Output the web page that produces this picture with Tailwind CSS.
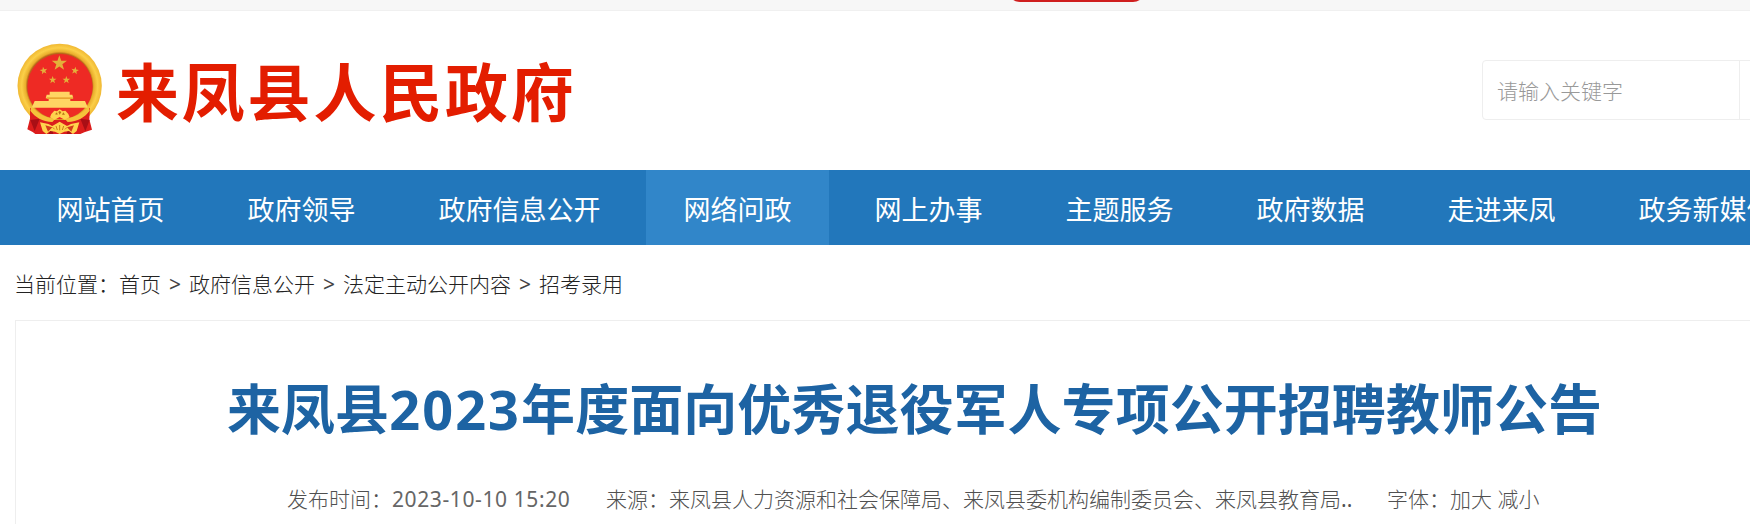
<!DOCTYPE html>
<html lang="zh-CN">
<head>
  <meta charset="UTF-8">
  <meta name="viewport" content="width=device-width, initial-scale=1.0">
  <title>来凤县人民政府</title>
  <script src="https://cdn.jsdelivr.net/npm/@tailwindcss/browser@4"></script>
</head>
<body class="h-[524px] overflow-hidden bg-white font-['Noto_Sans','Noto_Sans_CJK_SC',sans-serif] text-[21px]">
  <!-- Top bar -->
  <div class="h-[11px] bg-[#f7f7f7] border-b border-[#f0f0f0] overflow-hidden">
    <div class="ml-[1008px] w-[137px] h-10 -mt-[38px] rounded-[12px] bg-[#d01f1f]"></div>
  </div>

  <!-- Header -->
  <header class="flex h-[159px] w-[1860px]">
    <svg class="ml-[10px] mt-[27px] w-[100px] h-[100px] shrink-0" viewBox="0 0 300 300">
      <defs>
        <radialGradient id="gold" cx="50%" cy="50%" r="50%">
          <stop offset="77%" stop-color="#b9661a"/>
          <stop offset="81%" stop-color="#e9ae2c"/>
          <stop offset="90%" stop-color="#fbcf48"/>
          <stop offset="100%" stop-color="#f0b833"/>
        </radialGradient>
        <polygon id="star" points="0,-10 2.4,-3.2 9.5,-3.1 3.8,1.2 5.9,8.1 0,4 -5.9,8.1 -3.8,1.2 -9.5,-3.1 -2.4,-3.2"/>
      </defs>
      <circle cx="149" cy="143.500" r="126.500" fill="url(#gold)"/>
      <circle cx="150" cy="146" r="98" fill="#ee2a24"/>
      <g fill="#e3b03a">
        <use href="#star" transform="translate(148 76) scale(2.4)"/>
        <use href="#star" transform="translate(101 98) rotate(-10) scale(1.2)"/>
        <use href="#star" transform="translate(195 98) rotate(10) scale(1.2)"/>
        <use href="#star" transform="translate(128 126) scale(1.2)"/>
        <use href="#star" transform="translate(169 126) scale(1.2)"/>
      </g>
      <!-- gate tower -->
      <path fill="#ffd563" d="M119 161h60v9h8l3 11h-9v8h44l9 20H65l9-20h42v-8h-9l3-11h9z"/>
      <path fill="#e9a531" d="M110 178h79v5h-79z"/>
      <!-- ribbons -->
      <path fill="#dc1d1d" d="M60 209c20 19 42 31 66 37h46c26-6 48-18 68-37l-2 35 8 31-23 8-12 5H76l-8-6-16-8 8-32z"/>
      <path fill="#a90f15" d="M61 246l28-4-15 38zM239 246l-28-4 15 38zM125 258l-9 30h14zM175 258l9 30h-14z"/>
      <path fill="#f5c23b" d="M64 205c20 24 44 35 72 37l-9 10c-30-2-52-14-66-34zM236 205c-20 24-44 35-72 37l9 10c30-2 52-14 66-34z"/>
      <path fill="#ffd34d" d="M124 228l9-10 8 2 8-6 9 6 8-2 9 10 4 10-15 7-15-8-15 8-14-7z"/>
      <path fill="#b87316" d="M135 229l6-6 2 7zM156 230l4-7 5 7zM145 222l4-3 5 3-5 8z"/>
      <path fill="#ffd34d" d="M90 253l25 5 12 6 22-13 22 13 12-6 25-5-8 26-11 9-12-9-14 2-14 7-14-7-14-2-12 9-11-9z"/>
      <path fill="#d43c1c" d="M106 262l8 19 13-13zM192 262l-8 19-13-13z"/>
      <path fill="none" stroke="#c98218" stroke-width="3" d="M134 274l-6-6M142 276l-4-12M149 277v-16M157 276l4-12M165 274l6-6"/>
    </svg>
    <h1 class="ml-[6px] mt-[35px] h-[92px] leading-[92px] w-[480px] shrink-0 whitespace-nowrap text-[63px] tracking-[2.8px] font-bold text-[#e31d00]">来凤县人民政府</h1>
    <div class="ml-auto mt-[49px] flex h-[60px] w-[378px] shrink-0 rounded-[4px] border border-[#eeeeee]">
      <div class="w-[257px] border-r border-[#eeeeee] pl-[14px] leading-[60px] font-light text-[#999999]">请输入关键字</div>
    </div>
  </header>

  <!-- Main nav -->
  <nav class="flex h-[75px] gap-[8px] bg-[#2277bb] pl-[19px] text-[27px] leading-[79px] text-white whitespace-nowrap *:shrink-0 *:px-[37.5px]">
    <a>网站首页</a>
    <a>政府领导</a>
    <a>政府信息公开</a>
    <a class="bg-[#3186c9] h-[75px]">网络问政</a>
    <a>网上办事</a>
    <a>主题服务</a>
    <a>政府数据</a>
    <a>走进来凤</a>
    <a>政务新媒体</a>
  </nav>

  <!-- Breadcrumb -->
  <div class="flex h-[75px] pl-[14px] leading-[78px] font-light text-[#222222]">
    <span>当前位置：</span>
    <a>首页</a>
    <span class="w-[28px] text-center font-normal text-[#444444]">&gt;</span>
    <a>政府信息公开</a>
    <span class="w-[28px] text-center font-normal text-[#444444]">&gt;</span>
    <a>法定主动公开内容</a>
    <span class="w-[28px] text-center font-normal text-[#444444]">&gt;</span>
    <a>招考录用</a>
  </div>

  <!-- Article -->
  <main class="ml-[15px] h-[220px] w-[1800px] border border-[#eeeeee] text-[#505050] whitespace-nowrap">
    <h2 class="mt-[48px] pl-[211px] h-[80px] leading-[80px] text-[54px] tracking-[0.05px] font-bold text-[#1d63a3]">来凤县<span class="tracking-[2.1px]">2023</span>年度面向优秀退役军人专项公开招聘教师公告</h2>
    <div class="mt-[30px] flex pl-[271px] leading-[40px] font-light">
      <p class="w-[319px]">发布时间：<span class="font-normal tracking-[0.6px] text-[#666666]">2023-10-10 15:20</span></p>
      <p class="w-[781px]">来源：来凤县人力资源和社会保障局、来凤县委机构编制委员会、来凤县教育局<span class="font-normal">..</span></p>
      <p>字体：加大 减小</p>
    </div>
  </main>
</body>
</html>
